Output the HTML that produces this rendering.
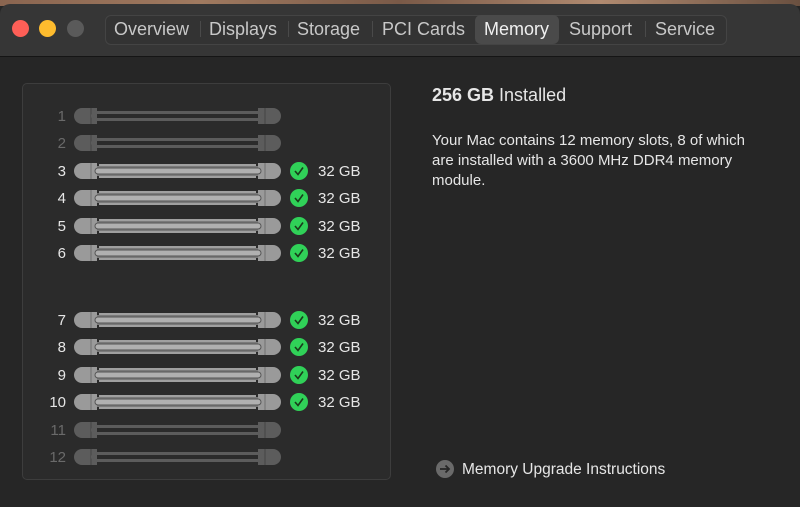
<!DOCTYPE html>
<html><head><meta charset="utf-8"><style>
body{margin:0;width:800px;height:507px;overflow:hidden;background:#262626;font-family:"Liberation Sans",sans-serif;position:relative}
.wall{position:absolute;left:0;top:0;width:800px;height:6px;background:linear-gradient(90deg,#8a6550,#a07a60,#7a5a48,#b08a70,#6a5040)}
.title{position:absolute;left:0;top:4px;width:800px;height:52px;background:#363636;border-radius:10px 10px 0 0;border-bottom:1px solid #151515}
.dot{position:absolute;top:20px;width:17px;height:17px;border-radius:50%}
.tabs{position:absolute;left:105px;top:15px;width:620px;height:28px;border:1px solid #444;border-radius:6px;background:#333}
.tab{position:absolute;top:15px;height:28px;line-height:28px;color:#c8c8c8;font-size:18px}
.sep{position:absolute;top:21px;width:1px;height:16px;background:#4a4a4a}
.sel{position:absolute;left:475px;top:15px;width:84px;height:29px;background:#4a4a4a;border-radius:6px}
.panel{position:absolute;left:22px;top:83px;width:367px;height:395px;background:#2b2b2b;border:1px solid #3d3d3d;border-radius:5px}
.t{position:absolute;color:#e6e6e6;font-size:15px}
</style></head><body>
<div class="wall"></div>
<div class="title"></div>
<div class="dot" style="left:12px;background:#fe5f57"></div>
<div class="dot" style="left:39px;background:#febc2e"></div>
<div class="dot" style="left:67px;background:#5a5a5a"></div>
<div class="tabs"></div>
<div class="sel"></div>
<div class="tab" style="left:114px">Overview</div>
<div class="sep" style="left:200px"></div>
<div class="tab" style="left:209px">Displays</div>
<div class="sep" style="left:288px"></div>
<div class="tab" style="left:297px">Storage</div>
<div class="sep" style="left:372px"></div>
<div class="tab" style="left:382px">PCI Cards</div>
<div class="tab" style="left:484px;color:#f0f0f0">Memory</div>
<div class="tab" style="left:569px">Support</div>
<div class="sep" style="left:645px"></div>
<div class="tab" style="left:655px">Service</div>
<div class="panel"></div>
<svg style="position:absolute;left:0;top:0" width="800" height="507">
<defs>
<g id="full">
<path d="M82,-8 H97 V8 H82 A8,8 0 0 1 82,-8Z" fill="#9a9a9a"/>
<path d="M258,-8 H273 A8,8 0 0 1 273,8 H258Z" fill="#9a9a9a"/>
<line x1="91" y1="-8" x2="91" y2="8" stroke="#707070"/>
<line x1="265" y1="-8" x2="265" y2="8" stroke="#707070"/>
<rect x="97" y="-5" width="161" height="10" fill="#7a7a7a"/>
<rect x="95" y="-3" width="166" height="6" rx="3" fill="#b0b0b0" stroke="#555" stroke-width="1"/>
<line x1="99" y1="-6" x2="256" y2="-6" stroke="#a0a0a0" stroke-width="2"/>
<line x1="99" y1="6" x2="256" y2="6" stroke="#a0a0a0" stroke-width="2"/>
</g>
<g id="empty">
<path d="M82,-8 H97 V8 H82 A8,8 0 0 1 82,-8Z" fill="#5c5c5c"/>
<path d="M258,-8 H273 A8,8 0 0 1 273,8 H258Z" fill="#5c5c5c"/>
<line x1="91" y1="-8" x2="91" y2="8" stroke="#444"/>
<line x1="265" y1="-8" x2="265" y2="8" stroke="#444"/>
<rect x="97" y="-5" width="161" height="3" fill="#5c5c5c"/>
<rect x="97" y="2" width="161" height="3" fill="#5c5c5c"/>
<path d="M97,-5 a5,5 0 0 0 0,10 M258,-5 a5,5 0 0 1 0,10" fill="none" stroke="#5c5c5c" stroke-width="2"/>
</g>
<g id="chk"><circle cx="299" cy="0" r="9" fill="#30d158"/><path d="M295,0 l3,3.5 l5,-7" fill="none" stroke="#1a3a1a" stroke-width="1.6"/></g>
</defs>
<g font-family="Liberation Sans" font-size="15">
<use href="#empty" y="116"/><text x="66" y="121" fill="#6a6a6a" text-anchor="end">1</text>
<use href="#empty" y="143"/><text x="66" y="148" fill="#6a6a6a" text-anchor="end">2</text>
<use href="#empty" y="430"/><text x="66" y="435" fill="#6a6a6a" text-anchor="end">11</text>
<use href="#empty" y="457"/><text x="66" y="462" fill="#6a6a6a" text-anchor="end">12</text>
<g fill="#e6e6e6">
<use href="#full" y="171"/><use href="#chk" y="171"/><text x="66" y="176" text-anchor="end">3</text><text x="318" y="176">32 GB</text>
<use href="#full" y="198"/><use href="#chk" y="198"/><text x="66" y="203" text-anchor="end">4</text><text x="318" y="203">32 GB</text>
<use href="#full" y="226"/><use href="#chk" y="226"/><text x="66" y="231" text-anchor="end">5</text><text x="318" y="231">32 GB</text>
<use href="#full" y="253"/><use href="#chk" y="253"/><text x="66" y="258" text-anchor="end">6</text><text x="318" y="258">32 GB</text>
<use href="#full" y="320"/><use href="#chk" y="320"/><text x="66" y="325" text-anchor="end">7</text><text x="318" y="325">32 GB</text>
<use href="#full" y="347"/><use href="#chk" y="347"/><text x="66" y="352" text-anchor="end">8</text><text x="318" y="352">32 GB</text>
<use href="#full" y="375"/><use href="#chk" y="375"/><text x="66" y="380" text-anchor="end">9</text><text x="318" y="380">32 GB</text>
<use href="#full" y="402"/><use href="#chk" y="402"/><text x="66" y="407" text-anchor="end">10</text><text x="318" y="407">32 GB</text>
</g></g>
<circle cx="445" cy="469" r="9" fill="#6a6a6a"/>
<path d="M440,469 h9 M445.5,465.5 l3.5,3.5 l-3.5,3.5" fill="none" stroke="#262626" stroke-width="1.8"/>
</svg>
<div class="t" style="left:432px;top:85px;font-size:18px"><b>256 GB</b> Installed</div>
<div class="t" style="left:432px;top:131px;width:335px;line-height:20px;font-size:15px">Your Mac contains 12 memory slots, 8 of which are installed with a 3600 MHz DDR4 memory module.</div>
<div class="t" style="left:462px;top:461px;font-size:15.5px">Memory Upgrade Instructions</div>
</body></html>
